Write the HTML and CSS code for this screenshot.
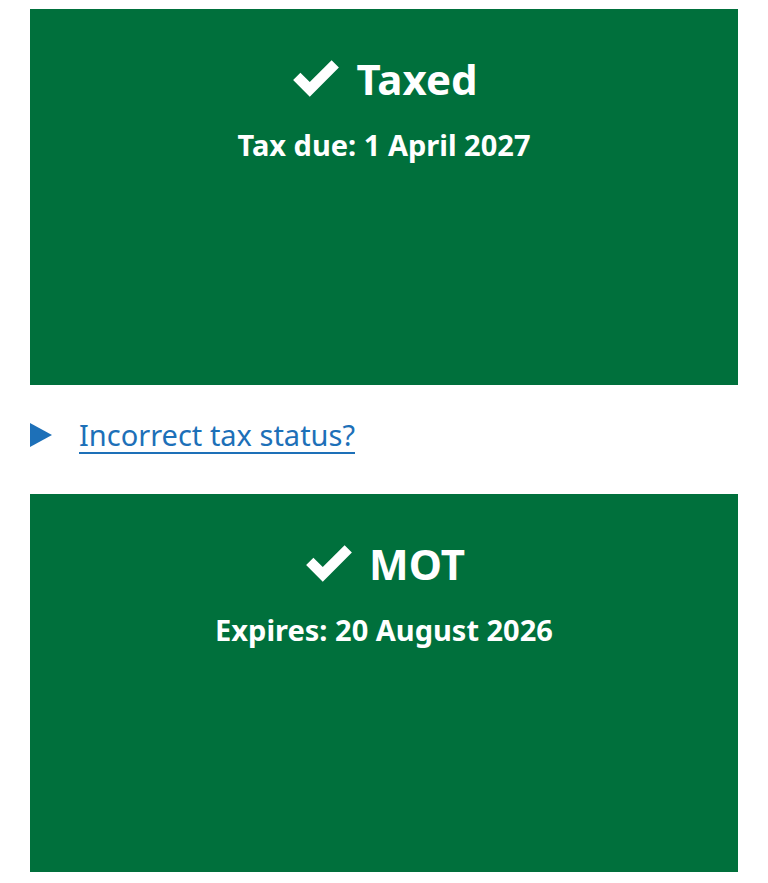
FILE: index.html
```html
<!DOCTYPE html>
<html lang="en">
<head>
    <meta charset="UTF-8">
    <meta name="viewport" content="width=device-width, initial-scale=1.0">
    <title>Vehicle details</title>
    <link rel="stylesheet" href="styles.css">
</head>
<body>
    <main class="contenido">
        <div class="estado">
            <h2 class="estado-titulo">
                <svg class="check" viewBox="0 0 50 40" aria-hidden="true">
                    <path d="M3 21 L10 14 L19 23 L40 2 L47 9 L19 37 Z" fill="#ffffff"/>
                </svg>
                Taxed
            </h2>
            <p class="estado-fecha">Tax due: 1 April 2027</p>
        </div>

        <details class="detalle">
            <summary><span class="flecha"></span><span class="enlace">Incorrect tax status?</span></summary>
        </details>

        <div class="estado estado-ultimo">
            <h2 class="estado-titulo">
                <svg class="check" viewBox="0 0 50 40" aria-hidden="true">
                    <path d="M3 21 L10 14 L19 23 L40 2 L47 9 L19 37 Z" fill="#ffffff"/>
                </svg>
                MOT
            </h2>
            <p class="estado-fecha">Expires: 20 August 2026</p>
        </div>
    </main>
</body>
</html>
```

FILE: styles.css
```css
body {
    font-family: "Noto Sans", Arial, sans-serif;
    margin: 0;
    padding: 0;
    background-color: #ffffff;
}
.contenido {
    padding: 9px 30px 0 30px;
}
.estado {
    background-color: #00703c;
    color: #ffffff;
    height: 376px;
    box-sizing: border-box;
    padding-top: 45px;
    text-align: center;
}
.estado-ultimo {
    height: 378px;
}
.estado-titulo {
    margin: 0;
    font-size: 42px;
    font-weight: 700;
    line-height: 50px;
    display: flex;
    justify-content: center;
    align-items: center;
    gap: 14px;
}
.check {
    width: 52px;
    height: 42px;
}
.estado-fecha {
    margin: 22px 0 0 0;
    font-size: 29px;
    font-weight: 700;
    line-height: 38px;
}
.detalle {
    margin: 0;
    padding: 30px 0 39px 0;
}
.detalle summary {
    list-style: none;
    display: flex;
    align-items: center;
    cursor: pointer;
}
.detalle summary::-webkit-details-marker {
    display: none;
}
.flecha {
    width: 0;
    height: 0;
    border-top: 12px solid transparent;
    border-bottom: 12px solid transparent;
    border-left: 22px solid #1d70b8;
    margin-right: 27px;
}
.enlace {
    color: #1d70b8;
    font-size: 29px;
    line-height: 40px;
    text-decoration: underline;
    text-decoration-thickness: 2px;
    text-underline-offset: 6px;
}
```
